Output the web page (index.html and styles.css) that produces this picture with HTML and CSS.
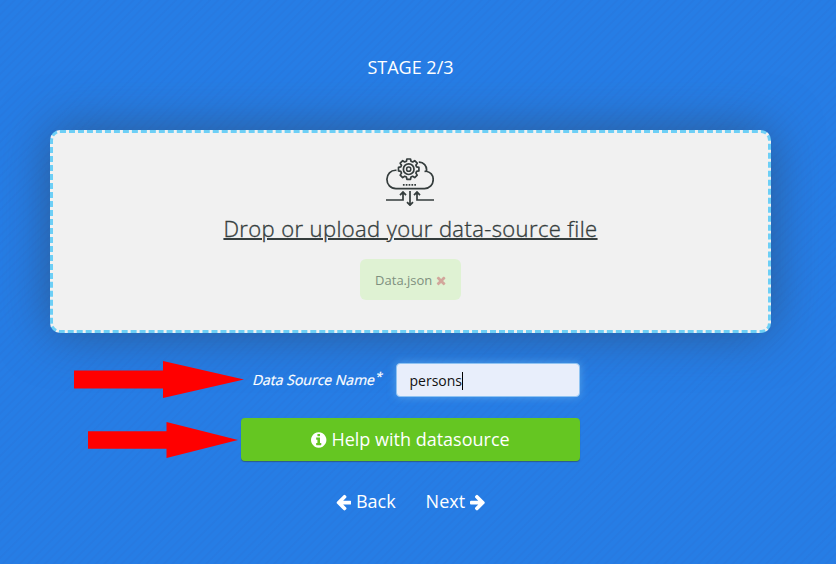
FILE: index.html
```html
<!DOCTYPE html>
<html lang="en">
<head>
<meta charset="utf-8">
<title>Stage 2/3</title>
<link rel="stylesheet" href="styles.css">
</head>
<body>
<main class="wizard">
  <h1 class="stage">STAGE 2/3</h1>
  <section class="dropzone">
    <svg class="cloud" viewBox="0 0 48 48" fill="none" stroke="#353d3d" stroke-width="1.7">
      <path d="M10.5 12.3C4.500 11.800 .9 16.500 .9 21.300C.9 26.500 4.500 30.600 10 30.600H38.500C43.700 30.600 47.200 26.500 47.200 21.600C47.200 17 44.500 14.200 40.500 13.200C41.200 8 37.500 4 32.800 4.200"/>
      <path d="M40.500 13.200L38.500 13.500"/>
      <path stroke-linejoin="round" stroke-width="1.7" d="M20.900 1h3.600l.5 2.300 1.700.7 2-1.300 2.500 2.500-1.300 2 .7 1.700 2.300.5v3.500l-2.300.5-.7 1.700 1.300 2-2.500 2.500-2-1.300-1.700.7-.5 2.300h-3.600l-.5-2.300-1.700-.7-2 1.300-2.500-2.500 1.300-2-.7-1.700-2.300-.5V9.400l2.300-.5.7-1.700-1.300-2 2.500-2.500 2 1.300 1.700-.7z"/>
      <circle cx="22.700" cy="11.200" r="5.300" stroke-width="1.700"/>
      <circle cx="22.700" cy="11.200" r="2.100" stroke-width="1.500"/>
      <path stroke-dasharray="1.700 1.150" d="M16.900 26.900H30.200"/>
      <path d="M0 42H17V34M14 37.200L17 34L20 37.200M48 42H31V34M28 37.200L31 34L34 37.200M24 33V47M21 44.200L24 47.200L27 44.200"/>
    </svg>
    <a class="upload">Drop or upload your data-source file</a>
    <div class="file">Data.json <svg class="fa" viewBox="0 0 1408 1792"><path transform="translate(-192)" d="M1490 1322q0 40-28 68l-136 136q-28 28-68 28t-68-28l-294-294-294 294q-28 28-68 28t-68-28l-136-136q-28-28-28-68t28-68l294-294-294-294q-28-28-28-68t28-68l136-136q28-28 68-28t68 28l294 294 294-294q28-28 68-28t68 28l136 136q28 28 28 68t-28 68l-294 294 294 294q28 28 28 68z"/></svg></div>
  </section>
  <div class="field">
    <label class="label" for="name">Data Source Name<span class="star">*</span></label>
    <div class="input" id="name">persons<span class="caret"></span></div>
  </div>
  <div class="help"><svg class="fa" viewBox="0 0 1536 1792"><path transform="translate(-128)" d="M1152 1376v-160q0-14-9-23t-23-9h-96v-512q0-14-9-23t-23-9h-320q-14 0-23 9t-9 23v160q0 14 9 23t23 9h96v320h-96q-14 0-23 9t-9 23v160q0 14 9 23t23 9h448q14 0 23-9t9-23zm-128-896v-160q0-14-9-23t-23-9h-192q-14 0-23 9t-9 23v160q0 14 9 23t23 9h192q14 0 23-9t9-23zm640 416q0 209-103 385.500t-279.500 279.500-385.500 103-385.500-103-279.500-279.500-103-385.500 103-385.500 279.500-279.500 385.500-103 385.500 103 279.500 279.500 103 385.500z"/></svg> Help with datasource</div>
  <nav class="nav">
    <span><svg class="fa" viewBox="0 0 1536 1792"><path d="M1536 896v128q0 53-32.500 90.500t-84.500 37.500h-704l293 294q38 36 38 90t-38 90l-75 76q-37 37-90 37-52 0-91-37l-651-652q-37-37-37-90 0-52 37-91l651-650q38-38 91-38 52 0 90 38l75 74q38 38 38 91t-38 91l-293 293h704q52 0 84.500 37.500t32.500 90.500z"/></svg> Back</span>
    <span>Next <svg class="fa" viewBox="0 0 1536 1792"><path transform="matrix(-1 0 0 1 1536 0)" d="M1536 896v128q0 53-32.500 90.500t-84.500 37.500h-704l293 294q38 36 38 90t-38 90l-75 76q-37 37-90 37-52 0-91-37l-651-652q-37-37-37-90 0-52 37-91l651-650q38-38 91-38 52 0 90 38l75 74q38 38 38 91t-38 91l-293 293h704q52 0 84.500 37.500t32.500 90.500z"/></svg></span>
  </nav>
</main>
<svg class="pointers" viewBox="0 0 836 564" fill="#f00">
  <path d="M74 370.500H163V361L244 379.500L163 398V388.500H74z"/>
  <path d="M88 431.300H166.500V422L238 440L166.500 458V448.700H88z"/>
</svg>
</body>
</html>
```
FILE: styles.css
```css
* { box-sizing: border-box; }
body {
  margin: 0;
  height: 564px;
  overflow: hidden;
  position: relative;
  font-family: "Open Sans", sans-serif;
  color: #fff;
  background: repeating-linear-gradient(135deg, #267de5 0 3px, #277ae1 4px 5px, #267de5 6px);
}
.wizard {
  width: 821px;
  padding: 54px 50px 0;
  display: flex;
  flex-direction: column;
  align-items: center;
}
.stage {
  margin: 0 0 50px;
  font-size: 18px;
  line-height: 26px;
  font-weight: 400;
}
.dropzone {
  width: 721px;
  height: 203px;
  padding-top: 25px;
  border: 3px dashed #6dcff6;
  border-radius: 10px;
  background: #f1f1f1;
  box-shadow: 0 0 50px rgba(45, 65, 90, .6);
  display: flex;
  flex-direction: column;
  align-items: center;
  color: #353d3d;
}
.cloud { width: 48px; height: 48px; margin-right: 1px; }
.upload {
  margin-top: 6px;
  font-size: 22px;
  line-height: 32px;
  font-weight: 300;
  letter-spacing: .39px;
  -webkit-text-stroke: .35px #353d3d;
  text-decoration: underline;
  text-decoration-thickness: 2px;
}
.file {
  margin-top: 15px;
  width: 101px;
  height: 41px;
  border-radius: 6px;
  background: #dff2d3;
  color: #7e8f7e;
  font-size: 13px;
  line-height: 42px;
  text-align: center;
  white-space: nowrap;
}
.fa { height: 1em; fill: currentColor; vertical-align: -.143em; }
.file .fa { fill: #d2a69b; }
.field {
  margin-top: 30px;
  width: 339px;
  height: 34px;
  display: flex;
  align-items: center;
  justify-content: flex-end;
}
.label {
  font-size: 14px;
  line-height: 34px;
  white-space: nowrap;
  transform: skewX(-14deg);
  -webkit-text-stroke: .2px #fff;
}
.star { font-size: 12px; position: relative; top: -4px; }
.input {
  margin-left: 14px;
  width: 184px;
  height: 34px;
  padding: 2px 13px 0 12.5px;
  border: 1px solid #8fc3f2;
  border-radius: 4px;
  background: #e8eefb;
  box-shadow: 0 0 8px rgba(102, 175, 233, .7);
  color: #111;
  font-size: 14px;
  line-height: 32px;
  display: flex;
  align-items: center;
}
.caret { width: 1px; height: 18px; background: #000; }
.help {
  margin-top: 21px;
  width: 339px;
  height: 43px;
  border-radius: 4px;
  background: #65c622;
  box-shadow: 0 1px 1px rgba(50, 70, 80, .6);
  font-size: 18px;
  line-height: 43px;
  text-align: center;
}
.nav {
  margin-top: 27px;
  display: flex;
  gap: 30px;
  font-size: 18px;
  line-height: 26px;
}
.pointers {
  position: absolute;
  left: 0;
  top: 0;
  width: 836px;
  height: 564px;
  pointer-events: none;
}
```
